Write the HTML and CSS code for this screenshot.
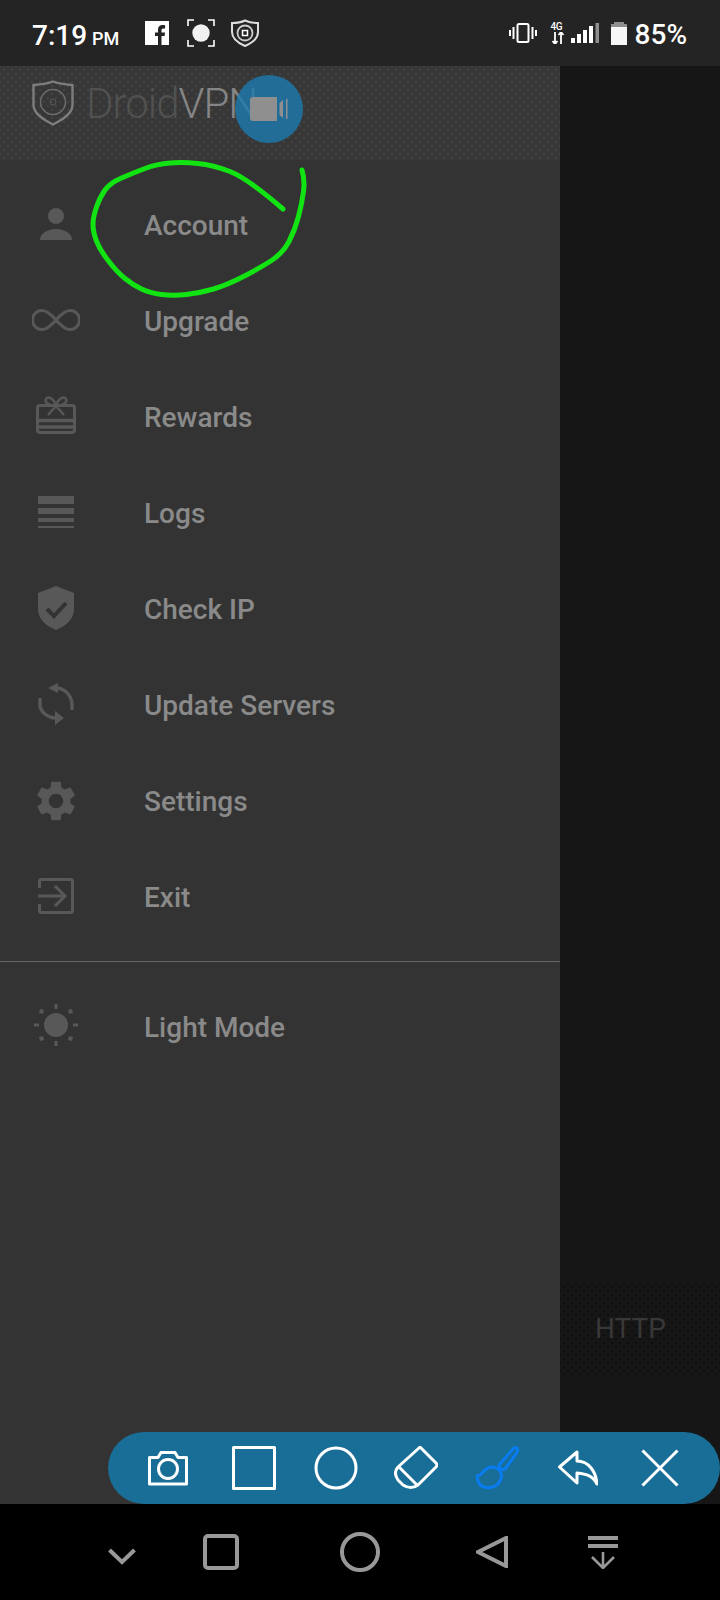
FILE: index.html
```html
<!DOCTYPE html>
<html>
<head>
	<title>DroidVPN</title>
	<link rel="stylesheet" href="styles.css">
</head>
<body>
	<div class="status">
		<div class="time">7:19 <small>PM</small></div>
		<svg class="st st-fb" viewBox="0 0 24 24"><path fill="#fff" d="M0 0H24V24H16.500V15H19.600L20 11.400H16.500V9.200C16.500 8.100 16.900 7.400 18.300 7.400H20.100V4.200C19.700 4.100 18.700 4 17.500 4C14.900 4 13 5.600 13 8.600V11.400H10V15H13V24H0Z"/></svg>
		<svg class="st st-shot" viewBox="0 0 28 28"><path fill="none" stroke="#fff" stroke-width="1.600" d="M1 7V1H7M21 1H27V7M27 21V27H21M7 27H1V21"/><circle cx="14" cy="14" r="8.700" fill="#f1f1f1"/></svg>
		<svg class="st st-vpn" viewBox="0 0 30 28"><path fill="none" stroke="#ddd" stroke-width="2" d="M15 1.500C19 3.500 24 4 28 4V13C28 20 22 24 15 27C8 24 2 20 2 13V4C6 4 11 3.500 15 1.500Z"/><circle cx="15" cy="14" r="7.500" fill="none" stroke="#ccc" stroke-width="1.800"/><rect x="12.500" y="11.500" width="5" height="5" fill="none" stroke="#fff" stroke-width="1.500"/></svg>
		<div class="status-right">
			<svg class="st st-vib" viewBox="0 0 28 20"><rect x="8.500" y="1" width="11" height="18" rx="1.500" fill="none" stroke="#fff" stroke-width="2"/><path fill="#fff" d="M0 7H2V13H0ZM3.500 4H5.500V16H3.500ZM22.500 4H24.500V16H22.500ZM26 7H28V13H26Z"/></svg>
			<div class="net">
				<span class="net-g">4G</span>
				<svg class="st-arrows" viewBox="0 0 14 12"><path fill="none" stroke="#fff" stroke-width="1.800" d="M4 0V12M10 0V12M1.500 9L4 12L6.500 9M7.500 3L10 0L12.500 3"/></svg>
			</div>
			<svg class="st st-sig" viewBox="0 0 28 20"><path fill="#fff" d="M0 15H4V20H0ZM6 11H10V20H6ZM12 7H16V20H12ZM18 3H22V20H18Z"/><rect x="24.500" y="0" width="3.500" height="20" fill="#8e8e8e"/></svg>
			<svg class="st st-bat" viewBox="0 0 16 23"><path fill="#8e8e8e" d="M3 0H13V2H16V5H0V2H3Z"/><rect y="5" width="16" height="18" fill="#f7f7f7"/></svg>
			<div class="pct">85%</div>
		</div>
	</div>

	<div class="main">
		<div class="drawer">
			<div class="drawer-head">
				<svg class="logo" viewBox="0 0 42 46"><path fill="none" stroke="#7d7d7d" stroke-width="2.400" d="M21 1.500C27 4 34 4.500 40.500 5V25C40.500 34 30 40 21 44.500C12 40 1.500 34 1.500 25V5C8 4.500 15 4 21 1.500Z"/><circle cx="21" cy="22" r="12.500" fill="none" stroke="#6c6c6c" stroke-width="1.500"/><circle cx="21" cy="22" r="3" fill="none" stroke="#5a5a5a"/></svg>
				<div class="brand"><span class="brand-dim">Droid</span>VPN</div>
			</div>
			<div class="menu">
				<div class="row">
					<svg class="ico" viewBox="0 0 48 48"><circle cx="24" cy="15" r="8"/><path d="M8 39C8 32 16 28 24 28C32 28 40 32 40 39Z"/></svg>
					<span>Account</span>
				</div>
				<div class="row">
					<svg class="ico line" viewBox="0 0 48 48"><path d="M24 23C18 16 14 13.500 10 13.500A9.500 9.500 0 0 0 10 32.500C14 32.500 18 30 24 23C30 16 34 13.500 38 13.500A9.500 9.500 0 0 1 38 32.500C34 32.500 30 30 24 23"/></svg>
					<span>Upgrade</span>
				</div>
				<div class="row">
					<svg class="ico line" viewBox="0 0 48 48"><rect x="5.500" y="12.500" width="37" height="27" rx="2.500"/><path d="M5.500 27.500H42.500M5.500 34H42.500" stroke-width="3.500"/><path d="M24 13C17 13 12 9 14 6C16 3 22 5 24 13C26 5 32 3 34 6C36 9 31 13 24 13M24 13L16 22M24 13L32 22" stroke-width="2.500"/></svg>
					<span>Rewards</span>
				</div>
				<div class="row">
					<svg class="ico" viewBox="0 0 48 48"><path d="M6 7H42V15H6ZM6 19H42V25H6ZM6 29H42V33H6ZM6 37H42V39H6Z"/></svg>
					<span>Logs</span>
				</div>
				<div class="row">
					<svg class="ico" viewBox="0 0 48 48"><path d="M24 1L42 8V24C42 34 34 41 24 45C14 41 6 34 6 24V8Z"/><path class="cut" d="M15 24L22 31L34 18"/></svg>
					<span>Check IP</span>
				</div>
				<div class="row">
					<svg class="ico line" viewBox="0 0 48 48"><path d="M24 7C33 7 40 15 40 24V29" stroke-width="3.500"/><path d="M24 37C15 37 8 30 8 24V17" stroke-width="3.500"/><path class="solid" d="M26 2V12L16 7ZM23 30V44L32 37Z"/></svg>
					<span>Update Servers</span>
				</div>
				<div class="row">
					<svg class="ico" viewBox="0 0 24 24"><path d="M19.140 12.940c.04-.3.06-.61.06-.94 0-.32-.02-.64-.07-.94l2.030-1.580c.18-.14.23-.41.12-.61l-1.920-3.320c-.12-.22-.37-.29-.59-.22l-2.390.96c-.5-.38-1.030-.7-1.620-.94l-.36-2.540c-.04-.24-.24-.41-.48-.41h-3.840c-.24 0-.43.17-.47.41l-.36 2.540c-.59.24-1.130.57-1.620.94l-2.390-.96c-.22-.08-.47 0-.59.22L2.740 8.870c-.12.21-.08.47.12.61l2.030 1.580c-.05.3-.09.63-.09.94s.02.64.07.94l-2.030 1.580c-.18.14-.23.41-.12.61l1.920 3.320c.12.22.37.29.59.22l2.390-.96c.5.38 1.030.7 1.620.94l.36 2.540c.05.24.24.41.48.41h3.840c.24 0 .44-.17.47-.41l.36-2.540c.59-.24 1.130-.56 1.620-.94l2.390.96c.22.08.47 0 .59-.22l1.920-3.320c.12-.22.07-.47-.12-.61l-2.010-1.580zM12 15.600c-1.980 0-3.600-1.620-3.600-3.600s1.620-3.600 3.600-3.600 3.600 1.620 3.600 3.600-1.620 3.600-3.600 3.600z"/></svg>
					<span>Settings</span>
				</div>
				<div class="row">
					<svg class="ico line" viewBox="0 0 48 48"><path d="M7.500 15V8.500A2 2 0 0 1 9.500 6.500H38.500A2 2 0 0 1 40.500 8.500V37.500A2 2 0 0 1 38.500 39.500H9.500A2 2 0 0 1 7.500 37.500V31"/><path d="M6 23H32M23 13L33 23L23 33"/></svg>
					<span>Exit</span>
				</div>
				<div class="divider"></div>
				<div class="row">
					<svg class="ico" viewBox="0 0 48 48"><circle cx="24" cy="22" r="12"/><path d="M22.500 1H25.500V6H22.500ZM22.500 38H25.500V43H22.500ZM2 20.500H7V23.500H2ZM41 20.500H46V23.500H41ZM8 6L12 7L11 11L7 10ZM40 6L41 10L37 11L36 7ZM8 38L7 34L11 33L12 37ZM40 38L36 37L37 33L41 34Z"/></svg>
					<span>Light Mode</span>
				</div>
			</div>
		</div>
		<div class="scrim">
			<div class="http-band">
				<div class="http">HTTP</div>
			</div>
		</div>
	</div>

	<div class="nav">
		<svg class="nav-down" viewBox="0 0 28 20"><path d="M1.500 3L14 15L26.500 3"/></svg>
		<svg class="nav-square" viewBox="0 0 36 36"><rect x="2" y="2" width="32" height="32" rx="3"/></svg>
		<svg class="nav-home" viewBox="0 0 40 40"><circle cx="20" cy="20" r="18"/></svg>
		<svg class="nav-back" viewBox="0 0 32 32"><path d="M2 16L30 2V30Z"/></svg>
		<svg class="nav-shade" viewBox="0 0 30 34"><path d="M0 3H30M0 11H30"/><path d="M15 17V33M4 22L15 33L26 22" stroke-width="2.600"/></svg>
	</div>

	<!-- video button floating on the logo -->
	<div class="bubble">
		<svg viewBox="0 0 38 24"><path fill="#8f8f8f" d="M3 0H27V24H3C1 24 0 23 0 21V3C0 1 1 0 3 0ZM29.500 6L33 3V21L29.500 18ZM36 2H37.500V22H36Z"/></svg>
	</div>

	<!-- hand drawn marker -->
	<svg class="marker" viewBox="0 0 720 1600"><path d="M283 209Q247 178 230 171.500Q213 165 198 163.500Q183 162 170 163Q157 164 145 168.500Q133 173 121.500 178Q110 183 105 190Q100 197 96.500 207Q93 217 93 224.500Q93 232 96.500 241Q100 250 108.500 261Q117 272 125 278.500Q133 285 141.500 289Q150 293 161.500 294.500Q173 296 186.500 294.500Q200 293 213.500 289Q227 285 243.500 276.500Q260 268 271.500 260.500Q283 253 289 241.500Q295 230 298.500 216.500Q302 203 303.500 191.500Q305 180 302 170"/></svg>

	<div class="tools">
		<svg class="t-camera" viewBox="0 0 40 36"><path d="M1.500 7.500H10L13 2.500H27L30 7.500H38.500V34H1.500Z"/><circle cx="20" cy="19" r="9.500"/></svg>
		<svg class="t-rect" viewBox="0 0 44 44"><rect x="1.500" y="1.500" width="41" height="41"/></svg>
		<svg class="t-circle" viewBox="0 0 44 44"><circle cx="22" cy="22" r="20"/></svg>
		<svg class="t-eraser" viewBox="0 0 44 44"><path d="M27 2L42 17Q44 19 42 21L24 39Q17 44 9 39L4 34Q-1 27 4 21L25 2Q26 1 27 2ZM4 20L23 39"/></svg>
		<svg class="t-brush" viewBox="0 0 44 44"><path d="M24 19L39 2Q43 1 43 5L30 23Q26 25 24 19Z"/><path d="M2 30C8 30 8 22 16 21C24 21 29 27 25 35C20 44 6 44 3 35Z"/></svg>
		<svg class="t-undo" viewBox="0 0 40 36"><path d="M1.500 17L19 2V11C31 11 38 22 39 34C35 26 29 24 19 23V33Z"/></svg>
		<svg class="t-close" viewBox="0 0 38 38"><path d="M1.500 1.500L36.500 36.500M36.500 1.500L1.500 36.500"/></svg>
	</div>
</body>
</html>
```

FILE: styles.css
```css
html, body{
	margin: 0;
	padding: 0;
}
body{
	position: relative;
	width: 720px;
	height: 1600px;
	overflow: hidden;
	background-color: #000;
	font-family: Roboto, "Liberation Sans", sans-serif;
	display: flex;
	flex-direction: column;
}

/* status bar */
.status{
	height: 66px;
	flex: none;
	background-color: #242424;
	color: #fff;
	display: flex;
	align-items: center;
	padding: 0 32px 0 32px;
	box-sizing: border-box;
}
.time{
	font-size: 28px;
	font-weight: 500;
	width: 113px;
	padding-top: 4px;
	white-space: nowrap;
}
.time small{
	font-size: 18px;
	margin-left: -2px;
}
.st{
	display: block;
	flex: none;
}
.st-fb{
	width: 24px;
	height: 24px;
}
.st-shot{
	width: 28px;
	height: 28px;
	margin-left: 18px;
}
.st-vpn{
	width: 30px;
	height: 28px;
	margin-left: 15px;
}
.status-right{
	margin-left: auto;
	display: flex;
	align-items: center;
}
.st-vib{
	width: 28px;
	height: 20px;
}
.net{
	width: 14px;
	height: 22px;
	margin-left: 14px;
}
.net-g{
	display: block;
	font-size: 10px;
	font-weight: 500;
	line-height: 10px;
	letter-spacing: -.5px;
}
.st-arrows{
	display: block;
	width: 14px;
	height: 12px;
}
.st-sig{
	width: 28px;
	height: 20px;
	margin-left: 6px;
}
.st-bat{
	width: 16px;
	height: 23px;
	margin-left: 12px;
}
.pct{
	font-size: 28px;
	font-weight: 500;
	margin-left: 8px;
	padding-top: 2px;
	margin-right: 1px;
}

/* drawer + dark page behind it */
.main{
	height: 1438px;
	flex: none;
	display: flex;
}
.drawer{
	width: 560px;
	flex: none;
	background-color: #333;
}
.drawer-head{
	height: 94px;
	box-sizing: border-box;
	padding: 14px 0 0 32px;
	display: flex;
	align-items: flex-start;
	background-color: #373737;
	background-image: radial-gradient(#444 .7px, transparent 1px), radial-gradient(#444 .7px, transparent 1px);
	background-size: 8px 8px;
	background-position: 0 0, 4px 4px;
}
.logo{
	width: 42px;
	height: 46px;
	flex: none;
}
.brand{
	margin-left: 12px;
	font-size: 42px;
	font-weight: 300;
	line-height: 48px;
	letter-spacing: -1px;
	color: #858585;
	white-space: nowrap;
}
.brand-dim{
	color: #515151;
}
.menu{
	padding-top: 17px;
}
.row{
	height: 96px;
	display: flex;
	align-items: center;
	padding-left: 32px;
	font-size: 28px;
	font-weight: 500;
	color: #8a8a8a;
}
.row span{
	margin-left: 64px;
}
.ico{
	width: 48px;
	height: 48px;
	flex: none;
	fill: #585858;
}
.ico.line{
	fill: none;
	stroke: #585858;
	stroke-width: 3;
}
.ico .cut{
	fill: none;
	stroke: #333;
	stroke-width: 4;
}
.ico .solid{
	fill: #585858;
	stroke: none;
}
.divider{
	height: 1px;
	margin-top: 16px;
	margin-bottom: 17px;
	background-color: #666;
}
.scrim{
	flex: 1;
	background-color: #161616;
	padding-top: 1217px;
}
.http-band{
	height: 92px;
	box-sizing: border-box;
	padding-left: 35px;
	display: flex;
	align-items: center;
	background-image: radial-gradient(#0d0d0d .7px, transparent 1px), radial-gradient(#0d0d0d .7px, transparent 1px);
	background-size: 8px 8px;
	background-position: 0 0, 4px 4px;
}
.http{
	font-size: 28px;
	line-height: 32px;
	color: #383838;
}

/* navigation bar */
.nav{
	height: 96px;
	flex: none;
	display: flex;
	align-items: center;
	background-color: #000;
	padding-left: 108px;
}
.nav svg{
	display: block;
	flex: none;
	fill: none;
	stroke: #989898;
	stroke-width: 4;
}
.nav-down{
	width: 28px;
	height: 20px;
	margin-top: 10px;
}
.nav-square{
	width: 36px;
	height: 36px;
	margin-left: 67px;
}
.nav-home{
	width: 40px;
	height: 40px;
	margin-left: 101px;
}
.nav-back{
	width: 32px;
	height: 32px;
	margin-left: 96px;
}
.nav-shade{
	width: 30px;
	height: 34px;
	margin-left: 80px;
}

/* overlays */
.bubble{
	position: absolute;
	left: 235px;
	top: 75px;
	width: 68px;
	height: 68px;
	border-radius: 50%;
	background-color: rgba(28, 122, 175, .8);
	display: flex;
	align-items: center;
	justify-content: center;
}
.bubble svg{
	width: 38px;
	height: 24px;
}
.marker{
	position: absolute;
	left: 0;
	top: 0;
	width: 720px;
	height: 1600px;
	fill: none;
	stroke: #12e312;
	stroke-width: 5;
	stroke-linecap: round;
	stroke-linejoin: round;
}
.tools{
	position: absolute;
	left: 108px;
	top: 1432px;
	width: 612px;
	height: 72px;
	box-sizing: border-box;
	padding-left: 40px;
	border-radius: 36px;
	background-color: #196e97;
	display: flex;
	align-items: center;
	gap: 38px;
}
.tools svg{
	display: block;
	flex: none;
	fill: none;
	stroke: #fff;
	stroke-width: 3;
	stroke-linejoin: round;
}
.t-camera{
	width: 40px;
	height: 36px;
	margin-right: 6px;
}
.t-rect, .t-circle, .t-eraser, .t-brush{
	width: 44px;
	height: 44px;
}
.t-eraser{
	margin-left: -2px;
}
.tools .t-brush{
	stroke: #0a7cf2;
	margin-left: -1px;
}
.t-undo{
	width: 40px;
	height: 36px;
	margin-left: 1px;
}
.t-close{
	width: 38px;
	height: 38px;
	margin-left: 5px;
}
```
